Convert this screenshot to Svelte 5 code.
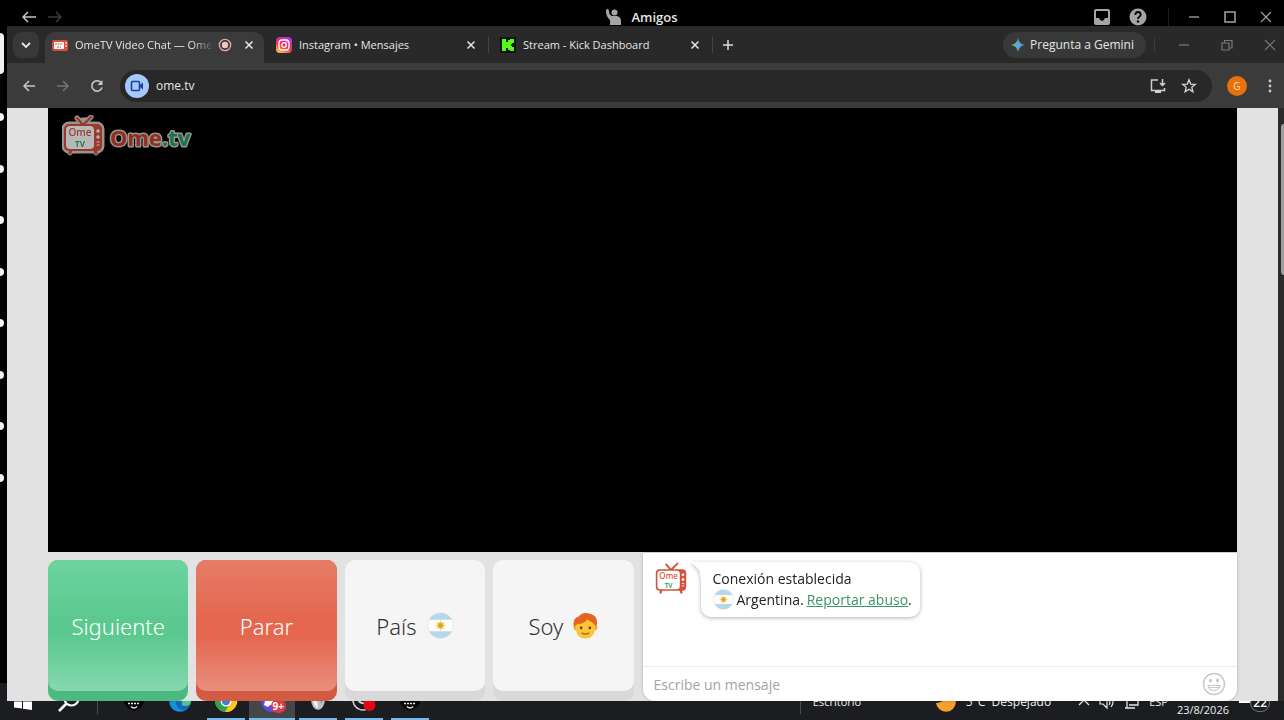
<script>
	let message = $state('');

	const railDots = [0, 1, 2, 3, 4, 5, 6, 7];
</script>

{#snippet cross()}
	<svg width="14" height="14" viewBox="0 0 14 14" aria-hidden="true">
		<path d="M2 2l10 10M12 2L2 12" stroke="currentColor" stroke-width="1.1" fill="none" />
	</svg>
{/snippet}

{#snippet tabCross()}
	<svg width="10" height="10" viewBox="0 0 10 10" aria-hidden="true">
		<path d="M1.5 1.5l7 7M8.5 1.5l-7 7" stroke="currentColor" stroke-width="1.5" fill="none" />
	</svg>
{/snippet}

{#snippet minus()}
	<svg width="14" height="14" viewBox="0 0 14 14" aria-hidden="true">
		<path d="M2 7h10" stroke="currentColor" stroke-width="1.3" fill="none" />
	</svg>
{/snippet}

{#snippet flag(size)}
	<svg class="flag" width={size} height={size} viewBox="0 0 26 26" aria-hidden="true">
		<circle cx="13" cy="13" r="12.5" fill="#fdfdfd" stroke="#e0e6ea" stroke-width=".8" />
		<path d="M2 7.5a12.5 12.5 0 0 1 22 0z" fill="#b4d7eb" />
		<path d="M2 18.5a12.5 12.5 0 0 0 22 0z" fill="#b4d7eb" />
		<path
			d="M13 7.8l1 2.8 2.7-1.3-1.3 2.7 2.8 1-2.8 1 1.3 2.7-2.7-1.3-1 2.8-1-2.8-2.7 1.3 1.3-2.7-2.8-1 2.8-1-1.3-2.7 2.7 1.3z"
			fill="#f5c542"
		/>
		<circle cx="13" cy="13" r="2.3" fill="#dba52f" />
	</svg>
{/snippet}

<!-- Телевизор с антенной, общий для логотипа и аватара -->
{#snippet tv()}
	<path d="M15 3l6 7 8-8" fill="none" stroke="#d6503c" stroke-width="2.4" stroke-linecap="round" />
	<path d="M9 35l-1 3M33 35l1 3" stroke="#d6503c" stroke-width="3" stroke-linecap="round" />
	<rect x="2" y="9" width="38" height="27" rx="5" fill="#d6503c" />
	<rect x="4" y="11" width="28" height="23" rx="4" fill="#fff" />
	<circle cx="36" cy="16" r="1.7" fill="#fff" />
	<circle cx="36" cy="22" r="1.7" fill="#fff" />
	<path d="M34.500 27h3M34.500 30h3" stroke="#fff" stroke-width="1" />
	<text class="tv-text" x="18" y="21" fill="#d6503c">Ome</text>
	<text class="tv-text small" x="18" y="32" fill="#3da577">TV</text>
{/snippet}

{#snippet shield()}
	<svg width="24" height="24" viewBox="0 0 24 24" aria-hidden="true">
		<path d="M2 5h20v9l-4 5-6 3-6-3-4-5z" fill="#050505" />
		<path d="M5 11h14M6 14.500h12" stroke="#e8e8e8" stroke-width="1.4" stroke-dasharray="2 1" />
		<path d="M9 17.500q3 3 6 0" stroke="#e8e8e8" stroke-width="1.500" fill="none" />
	</svg>
{/snippet}

<div class="desktop">
	<footer class="taskbar">
		<button class="task" aria-label="Inicio">
			<svg width="18" height="18" viewBox="0 0 18 18">
				<path d="M0 2.500l8-1v7H0zM9 1.400L18 0v8.500H9zM0 9.500h8v7l-8-1zM9 9.500h9V18l-9-1.300z" fill="#fff" />
			</svg>
		</button>
		<button class="task" aria-label="Buscar">
			<svg width="22" height="22" viewBox="0 0 22 22">
				<circle cx="13.500" cy="8.500" r="7" fill="none" stroke="#fff" stroke-width="2.200" />
				<path d="M8.500 13.500L1 21" stroke="#fff" stroke-width="2.600" />
			</svg>
		</button>
		<span class="task-line first"></span>
		<button class="task" aria-label="Lanzador">{@render shield()}</button>
		<button class="task" aria-label="Edge">
			<svg width="24" height="24" viewBox="0 0 24 24">
				<circle cx="12" cy="12" r="11" fill="#1466b8" />
				<path d="M1 9A11 11 0 0 1 23 12q0 5-6 5-4 0-3-3 1-6-5-6-5 0-8 4z" fill="#45c98a" />
				<path d="M8 12q-1 8 8 9-9 4-14-5 0-5 6-4z" fill="#1b8fd6" />
			</svg>
		</button>
		<button class="task open" aria-label="Chrome">
			<svg width="24" height="24" viewBox="0 0 24 24">
				<circle cx="12" cy="12" r="11" fill="#e23c2f" />
				<path d="M2.500 6.500A11 11 0 0 0 11 23l5-8.500-4 2-5-2z" fill="#2fa34f" />
				<path d="M12 7h10a11 11 0 0 1-11 16l5-8.500z" fill="#f8c922" />
				<circle cx="12" cy="12" r="5.500" fill="#fff" />
				<circle cx="12" cy="12" r="4.200" fill="#3c7ee8" />
			</svg>
		</button>
		<button class="task open active" aria-label="Discord">
			<svg width="24" height="24" viewBox="0 0 24 24">
				<circle cx="12" cy="12" r="11" fill="#5a4be0" />
				<path d="M6 8q6-3 12 0l2 8-4 2-2-2h-4l-2 2-4-2z" fill="#fff" />
			</svg>
			<span class="badge">9+</span>
		</button>
		<button class="task open" aria-label="Aplicación">
			<svg width="22" height="22" viewBox="0 0 22 22">
				<ellipse cx="11" cy="9" rx="7" ry="11" fill="#b9bfc3" />
				<path d="M6 8q5 2 5 10-5-1-5-10z" fill="#eef1f2" />
				<path d="M13 8h3l-2 6z" fill="#7b8387" />
			</svg>
		</button>
		<button class="task open" aria-label="OBS">
			<svg width="24" height="24" viewBox="0 0 24 24">
				<circle cx="11" cy="11" r="10" fill="#17191b" stroke="#d2d2d2" stroke-width="1.500" />
				<path d="M6 9q1 6 7 5M13 6q5 2 3 8" stroke="#d2d2d2" stroke-width="2" fill="none" />
				<circle cx="17.500" cy="16" r="6" fill="#e30613" />
			</svg>
		</button>
		<button class="task open" aria-label="Lanzador 2">{@render shield()}</button>

		<div class="tray">
			<span class="task-line"></span>
			<span class="desk-label">Escritorio</span>
			<svg width="22" height="22" viewBox="0 0 22 22" aria-hidden="true">
				<path d="M13 1q1 9-12 11a10 10 0 1 0 12-11z" fill="#f5a02c" />
			</svg>
			<span class="weather">5°C&nbsp; Despejado</span>
			<svg width="12" height="12" viewBox="0 0 12 12" aria-hidden="true">
				<path d="M1 9l5-5 5 5" fill="none" stroke="#e8e8e8" stroke-width="1.300" />
			</svg>
			<svg width="16" height="16" viewBox="0 0 16 16" aria-hidden="true">
				<path d="M1 6h3l4-4v12l-4-4H1zM10 5q2 3 0 6M12 3q4 5 0 10" fill="none" stroke="#e8e8e8" stroke-width="1.200" />
			</svg>
			<svg width="16" height="16" viewBox="0 0 16 16" aria-hidden="true">
				<path d="M2 3h12v8H5M3 6v8M1 14h10" fill="none" stroke="#e8e8e8" stroke-width="1.300" />
			</svg>
			<span>ESP</span>
			<span class="date">23/8/2026</span>
			<span class="notice">
				<svg width="20" height="18" viewBox="0 0 20 18" aria-hidden="true">
					<path d="M1 1h16v11H8l-4 0H1z" fill="#fff" />
				</svg>
				<span class="count">22</span>
			</span>
		</div>
	</footer>

	<header class="titlebar">
		<nav class="history">
			<button aria-label="Atrás">
				<svg width="16" height="12" viewBox="0 0 16 12">
					<path d="M15 6H2M7 1L2 6l5 5" fill="none" stroke="#c4c4c4" stroke-width="1.500" />
				</svg>
			</button>
			<button aria-label="Adelante">
				<svg width="16" height="12" viewBox="0 0 16 12">
					<path d="M1 6h13M9 1l5 5-5 5" fill="none" stroke="#3c3c3c" stroke-width="1.500" />
				</svg>
			</button>
		</nav>
		<div class="title">
			<svg width="16" height="16" viewBox="0 0 16 16" aria-hidden="true">
				<circle cx="8.500" cy="3.500" r="3" fill="#a5a5a5" />
				<path d="M1 0q2 0 2 2 0 4 3 5h5q4 1 4 5v4H4v-5Q0 8 0 2q0-2 1-2z" fill="#a5a5a5" />
			</svg>
			<span>Amigos</span>
		</div>
		<div class="title-tools">
			<button aria-label="Bandeja">
				<svg width="16" height="16" viewBox="0 0 16 16">
					<path d="M2 0h12q2 0 2 2v12q0 2-2 2H2q-2 0-2-2V2q0-2 2-2zM2 2v7h3q1 3 3 3t3-3h3V2z" fill="#a5a5a5" fill-rule="evenodd" />
				</svg>
			</button>
			<button aria-label="Ayuda">
				<svg width="18" height="18" viewBox="0 0 18 18">
					<circle cx="9" cy="9" r="8.500" fill="#a5a5a5" />
					<path d="M6.300 7q0-3 2.700-3t2.700 2.500q0 1.300-1.400 2.200Q9 9.500 9 11" fill="none" stroke="#000" stroke-width="1.800" />
					<circle cx="9" cy="13.500" r="1.200" fill="#000" />
				</svg>
			</button>
			<span class="title-line"></span>
			<button aria-label="Minimizar">{@render minus()}</button>
			<button aria-label="Maximizar">
				<svg width="12" height="12" viewBox="0 0 12 12">
					<rect x="1" y="1" width="10" height="10" fill="none" stroke="currentColor" stroke-width="1.500" />
				</svg>
			</button>
			<button aria-label="Cerrar">{@render cross()}</button>
		</div>
	</header>

	<div class="stage">
		<aside class="rail">
			<span class="pill"></span>
			<div class="dots">
				{#each railDots as dot (dot)}
					<span class="dot"></span>
				{/each}
			</div>
		</aside>

		<main class="browser">
			<div class="tabstrip">
				<button class="tab-search" aria-label="Buscar pestañas">
					<svg width="10" height="8" viewBox="0 0 10 8">
						<path d="M1 2l4 4 4-4" fill="none" stroke="#e6e6e6" stroke-width="1.800" />
					</svg>
				</button>

				<div class="tab current">
					<svg width="16" height="16" viewBox="0 0 16 16" aria-hidden="true">
						<rect x="0" y="3" width="16" height="11" rx="2" fill="#d6503c" />
						<rect x="2" y="5" width="10" height="7" rx="1" fill="#fff" />
						<path d="M3 7h8M5 10h4" stroke="#cf8d76" stroke-width="1.500" stroke-dasharray="2 .6" />
						<path d="M13 6h2M13 9h2" stroke="#fff" stroke-width="1" />
					</svg>
					<span class="tab-name fade">OmeTV Video Chat — Ome</span>
					<svg width="14" height="14" viewBox="0 0 14 14" aria-hidden="true">
						<circle cx="7" cy="7" r="5.700" fill="none" stroke="#e4a9a9" stroke-width="1.300" />
						<circle cx="7" cy="7" r="3.200" fill="#f1c3c3" />
					</svg>
					<button class="tab-close" aria-label="Cerrar pestaña">{@render tabCross()}</button>
				</div>

				<div class="tab">
					<svg width="16" height="16" viewBox="0 0 16 16" aria-hidden="true">
						<defs>
							<linearGradient id="insta" x1="0.2" y1="1" x2="0.7" y2="0">
								<stop offset="0" stop-color="#ffc83d" />
								<stop offset=".45" stop-color="#f6314d" />
								<stop offset="1" stop-color="#b52be0" />
							</linearGradient>
						</defs>
						<rect x="0" y="0" width="16" height="16" rx="4" fill="url(#insta)" />
						<rect x="3" y="3" width="10" height="10" rx="3" fill="none" stroke="#fff" stroke-width="1.300" />
						<circle cx="8" cy="8" r="2.300" fill="none" stroke="#fff" stroke-width="1.300" />
						<circle cx="11" cy="5" r=".7" fill="#fff" />
					</svg>
					<span class="tab-name">Instagram • Mensajes</span>
					<button class="tab-close" aria-label="Cerrar pestaña">{@render tabCross()}</button>
				</div>

				<div class="tab">
					<svg width="16" height="16" viewBox="0 0 16 16" aria-hidden="true">
						<rect width="16" height="16" fill="#0c130a" />
						<path d="M2 2h4v3h2V3h2V2h4v4h-2v1h-1v2h1v1h2v4h-4v-1H8v-2H6v3H2z" fill="#53fc18" />
						<path d="M5 5h5v6H5z" fill="#53fc18" />
					</svg>
					<span class="tab-name">Stream - Kick Dashboard</span>
					<button class="tab-close" aria-label="Cerrar pestaña">{@render tabCross()}</button>
				</div>

				<button class="new-tab" aria-label="Nueva pestaña">
					<svg width="12" height="12" viewBox="0 0 12 12">
						<path d="M6 1v10M1 6h10" stroke="#dcdcdc" stroke-width="1.500" />
					</svg>
				</button>

				<button class="gemini">
					<svg width="14" height="14" viewBox="0 0 14 14" aria-hidden="true">
						<defs>
							<linearGradient id="spark">
								<stop offset="0" stop-color="#8fc16a" />
								<stop offset=".5" stop-color="#5aa4d8" />
								<stop offset="1" stop-color="#4a8cf0" />
							</linearGradient>
						</defs>
						<path d="M7 0q1 6 7 7-6 1-7 7-1-6-7-7 6-1 7-7z" fill="url(#spark)" />
					</svg>
					<span>Pregunta a Gemini</span>
				</button>
				<div class="win-tools">
					<button aria-label="Minimizar ventana">{@render minus()}</button>
					<button aria-label="Restaurar ventana">
						<svg width="14" height="14" viewBox="0 0 14 14">
							<path d="M2 5h7v7H2zM4.500 5V2.500H12V10H9" fill="none" stroke="currentColor" stroke-width="1.200" />
						</svg>
					</button>
					<button aria-label="Cerrar ventana">{@render cross()}</button>
				</div>
			</div>

			<div class="toolbar">
				<div class="nav">
					<button aria-label="Página anterior">
						<svg width="16" height="16" viewBox="0 0 16 16">
							<path d="M14 8H3M8 3L3 8l5 5" fill="none" stroke="#c8c8c8" stroke-width="1.500" />
						</svg>
					</button>
					<button aria-label="Página siguiente">
						<svg width="16" height="16" viewBox="0 0 16 16">
							<path d="M2 8h11M8 3l5 5-5 5" fill="none" stroke="#747474" stroke-width="1.500" />
						</svg>
					</button>
					<button aria-label="Recargar">
						<svg width="16" height="16" viewBox="0 0 16 16">
							<path d="M13 9.500A5.200 5.200 0 1 1 12 4.500" fill="none" stroke="#c8c8c8" stroke-width="1.600" />
							<path d="M13.500 2v5h-5z" fill="#c8c8c8" />
						</svg>
					</button>
				</div>
				<div class="omnibox">
					<span class="cam">
						<svg width="14" height="12" viewBox="0 0 14 12" aria-hidden="true">
							<rect x="1.500" y="1.500" width="8" height="9" rx="1" fill="none" stroke="#12459c" stroke-width="1.600" />
							<path d="M10 5l3-2.500v7L10 7z" fill="#12459c" />
						</svg>
					</span>
					<input class="url" aria-label="Dirección" value="ome.tv" />
					<button aria-label="Instalar">
						<svg width="16" height="16" viewBox="0 0 16 16">
							<path d="M8 2H1.500v10.500h13V10M12.500 1v6M10 5l2.500 2.500L15 5" fill="none" stroke="#d0d0d0" stroke-width="1.500" />
							<path d="M5 12h6v3H5z" fill="#d0d0d0" />
						</svg>
					</button>
					<button aria-label="Favorito">
						<svg width="16" height="16" viewBox="0 0 16 16">
							<path d="M8 1.800l1.700 4.300 4.600.3-3.500 2.900 1.100 4.500L8 11.300l-3.900 2.500 1.100-4.500L1.700 6.400l4.600-.3z" fill="none" stroke="#d8d8d8" stroke-width="1.300" />
						</svg>
					</button>
				</div>
				<button class="profile">G</button>
				<button aria-label="Menú">
					<svg width="16" height="16" viewBox="0 0 16 16">
						<g fill="#c8c8c8">
							<circle cx="8" cy="3" r="1.400" />
							<circle cx="8" cy="8" r="1.400" />
							<circle cx="8" cy="13" r="1.400" />
						</g>
					</svg>
				</button>
			</div>

			<div class="viewport">
				<div class="page">
					<section class="video">
						<svg class="logo" width="134" height="42" viewBox="0 0 134 42" role="img" aria-label="Ome.tv">
							<g class="halo">
								<path d="M15 3l6 7 8-8M9 35l-1 3M33 35l1 3" />
								<rect x="2" y="9" width="38" height="27" rx="5" />
							</g>
							{@render tv()}
							<text class="word" x="48" y="31"><tspan fill="#c93f2c">Ome</tspan><tspan fill="#26a06b">.tv</tspan></text>
						</svg>
					</section>

					<section class="panel">
						<div class="actions">
							<button class="key green"><span>Siguiente</span></button>
							<button class="key red"><span>Parar</span></button>
							<button class="key"><span>País {@render flag(27)}</span></button>
							<button class="key">
								<span>
									Soy
									<svg width="25" height="28" viewBox="0 0 26 28" aria-hidden="true">
										<circle cx="3" cy="16" r="2.500" fill="#f5ae28" />
										<circle cx="23" cy="16" r="2.500" fill="#f5ae28" />
										<path d="M3 11q10-9 20 0v6q-1 10-10 10T3 17z" fill="#fcc436" />
										<path d="M1 15Q-1 6 6 4q4-5 11-3 8 2 8 9 0 3-1 5-1-3-4-5-3-1-5-3-3 5-10 5-2 1-4 3z" fill="#e5641f" />
										<circle cx="8.500" cy="16" r="1.400" fill="#6b4210" />
										<circle cx="17.500" cy="16" r="1.400" fill="#6b4210" />
										<path d="M9 21q4 3 8 0" fill="none" stroke="#a4641a" stroke-width="1.300" />
									</svg>
								</span>
							</button>
						</div>

						<div class="chat">
							<div class="log">
								<svg width="34" height="32" viewBox="0 0 42 40" aria-hidden="true">{@render tv()}</svg>
								<div class="bubble">
									<p>Conexión establecida</p>
									<p>{@render flag(21)} Argentina. <a href="#abuso">Reportar abuso</a><i>.</i></p>
								</div>
							</div>
							<div class="compose">
								<input aria-label="Mensaje" placeholder="Escribe un mensaje" bind:value={message} />
								<button aria-label="Emojis">
									<svg width="24" height="24" viewBox="0 0 24 24">
										<circle cx="12" cy="12" r="10.500" fill="none" stroke="#c9c9c9" stroke-width="1.500" />
										<ellipse cx="8.500" cy="8.500" rx="1.200" ry="2" fill="#bdbdbd" />
										<ellipse cx="15.500" cy="8.500" rx="1.200" ry="2" fill="#bdbdbd" />
										<path d="M6 13.500h12q-1 5-6 5t-6-5zM7 15.500h10" fill="none" stroke="#c9c9c9" stroke-width="1.200" />
									</svg>
								</button>
							</div>
						</div>
					</section>
				</div>
				<div class="scroll"><span class="thumb"></span></div>
			</div>
		</main>
	</div>
</div>

<style>
	:global(body) {
		margin: 0;
		background: #000;
	}

	.desktop {
		position: relative;
		display: flex;
		flex-direction: column;
		box-sizing: border-box;
		height: 100vh;
		padding-bottom: 19px;
		overflow: hidden;
		background: #000;
		color: #e6e6e6;
		font-family: 'Open Sans', 'Noto Sans', sans-serif;
		font-size: 11px;
	}

	button {
		display: flex;
		align-items: center;
		justify-content: center;
		flex: none;
		margin: 0;
		padding: 0;
		border: 0;
		background: none;
		color: inherit;
		font: inherit;
	}

	input {
		min-width: 0;
		flex: 1;
		padding: 0;
		border: 0;
		outline: 0;
		background: none;
		color: inherit;
		font: inherit;
	}

	svg {
		flex: none;
	}

	/* Заголовок внешнего окна */
	.titlebar {
		display: grid;
		grid-template-columns: 1fr auto 1fr;
		align-items: center;
		flex: none;
		height: 26px;
		padding-top: 8px;
		box-sizing: border-box;
	}

	.history {
		display: flex;
		gap: 10px;
		padding-left: 21px;
	}

	.title {
		display: flex;
		align-items: center;
		gap: 9px;
		font-size: 13px;
		line-height: 18px;
		font-weight: 600;
	}

	.title-tools {
		display: flex;
		justify-content: flex-end;
		color: #a5a5a5;
	}

	.title-tools button {
		width: 36px;
	}

	.title-line {
		width: 1px;
		margin: 0 7px 0 12px;
		background: #1c1c1c;
	}

	.stage {
		position: relative;
		z-index: 1;
		display: flex;
		flex: 1;
		min-height: 0;
	}

	/* Полоска серверов слева */
	.rail {
		display: flex;
		flex-direction: column;
		align-items: flex-end;
		flex: none;
		width: 4px;
		margin-right: 3px;
		padding-top: 7px;
		box-sizing: border-box;
		overflow: hidden;
	}

	.pill,
	.dot {
		flex: none;
		width: 8px;
		background: #f2f2f2;
	}

	.pill {
		height: 41px;
		margin-bottom: 39px;
		border-radius: 4px;
	}

	.dots {
		display: flex;
		flex: none;
		flex-direction: column;
		justify-content: space-between;
		height: 369px;
	}

	.dot {
		height: 8px;
		border-radius: 50%;
	}

	.browser {
		display: flex;
		flex: 1;
		flex-direction: column;
		min-width: 0;
		background: #3b3b3b;
	}

	.tabstrip {
		display: flex;
		align-items: center;
		flex: none;
		height: 37px;
		padding-left: 6px;
		background: #292929;
	}

	.tab-search {
		width: 26px;
		height: 26px;
		margin-right: 6px;
		border-radius: 8px;
		background: #383838;
	}

	.tab {
		display: flex;
		align-items: center;
		flex: 0 1 224px;
		min-width: 0;
		box-sizing: border-box;
		height: 16px;
		padding: 0 12px 0 11px;
		gap: 7px;
		border-right: 1px solid #444;
	}

	.tab.current {
		flex: 0 1 219px;
		align-self: flex-end;
		height: 31px;
		margin-right: 1px;
		padding: 0 10px 5px 7px;
		border-right: 0;
		border-radius: 10px 10px 0 0;
		background: #3b3b3b;
	}

	.tab-name {
		flex: 1;
		min-width: 0;
		overflow: hidden;
		white-space: nowrap;
		line-height: 16px;
	}

	.fade {
		mask-image: linear-gradient(90deg, #000 85%, rgba(0, 0, 0, 0.2));
	}

	.tab-close {
		width: 10px;
		margin-left: 5px;
	}

	.new-tab {
		width: 30px;
	}

	.gemini {
		gap: 5px;
		height: 26px;
		margin-left: auto;
		padding: 0 12px 0 8px;
		border-radius: 13px;
		background: #383838;
		font-size: 12px;
	}

	.win-tools {
		display: flex;
		gap: 29px;
		margin-left: 8px;
		padding: 0 7px 0 22px;
		border-left: 1px solid #3c3c3c;
		color: #777;
	}

	.toolbar {
		display: flex;
		align-items: center;
		flex: none;
		gap: 15px;
		height: 45px;
		padding: 0 6px 0 14px;
	}

	.nav {
		display: flex;
		gap: 18px;
	}

	.omnibox {
		display: flex;
		align-items: center;
		flex: 1;
		gap: 15px;
		height: 32px;
		padding: 0 15px 0 5px;
		border-radius: 16px;
		background: #282828;
	}

	.cam {
		display: flex;
		align-items: center;
		justify-content: center;
		flex: none;
		width: 24px;
		height: 24px;
		margin-right: -8px;
		border-radius: 50%;
		background: #a8c7fa;
	}

	.url {
		font-size: 12px;
	}

	.profile {
		width: 20px;
		height: 20px;
		border-radius: 50%;
		background: #e8710a;
		color: #f8dcc0;
		font-size: 10px;
	}

	.viewport {
		display: flex;
		flex: 1;
		min-height: 0;
	}

	.page {
		display: flex;
		flex: 1;
		flex-direction: column;
		padding: 0 41px;
		background: #e2e2e2;
	}

	.scroll {
		width: 3px;
		padding: 16px 0 0 3px;
		background: #2b2b2b;
	}

	.thumb {
		display: block;
		height: 151px;
		border-radius: 3px 0 0 3px;
		background: #9c9c9c;
	}

	.video {
		flex: 1;
		padding: 7px 14px;
		background: #000;
	}

	.logo {
		display: block;
		opacity: 0.72;
	}

	.halo {
		fill: #d5cdc4;
		stroke: #d5cdc4;
		stroke-width: 5px;
		stroke-linejoin: round;
		stroke-linecap: round;
	}

	.tv-text {
		font-family: 'Noto Sans', sans-serif;
		font-size: 10px;
		font-weight: 500;
		text-anchor: middle;
	}

	.tv-text.small {
		font-size: 8px;
		font-weight: 700;
	}

	.word {
		font-family: 'Noto Sans', sans-serif;
		font-size: 22px;
		font-weight: 700;
		paint-order: stroke;
		stroke: #d5cdc4;
		stroke-width: 3px;
		stroke-linejoin: round;
	}

	/* Кнопки и чат под видео */
	.panel {
		display: grid;
		grid-template-columns: 1fr 1fr;
		flex: none;
		height: 149px;
	}

	.actions {
		display: grid;
		grid-template-columns: repeat(4, 1fr);
		gap: 8px;
		padding: 8px 9px 0 0;
	}

	.key {
		align-items: stretch;
		padding-bottom: 10px;
		border-radius: 10px;
		background: #d9d9d9;
		color: #333;
		font-family: 'Noto Sans', sans-serif;
		font-size: 22px;
		font-weight: 300;
	}

	.key span {
		display: flex;
		align-items: center;
		justify-content: center;
		flex: 1;
		gap: 10px;
		border-radius: 10px;
		background: #f5f5f5;
	}

	.green {
		background: #4cb981;
		color: #fff;
	}

	.green span {
		background: linear-gradient(#6dd4a0, #5bc98f 45%, #5bc98f 58%, #86d8ae);
	}

	.red {
		background: #d35b42;
		color: #fff;
	}

	.red span {
		background: linear-gradient(#e67c67, #e4674e 45%, #e4674e 58%, #e98f7e);
	}

	.chat {
		display: flex;
		flex-direction: column;
		margin-top: 1px;
		border-radius: 0 0 12px 12px;
		background: #fff;
		box-shadow: 0 0 3px rgba(0, 0, 0, 0.25);
		color: #222;
	}

	.log {
		display: flex;
		align-items: flex-start;
		flex: 1;
		gap: 13px;
		padding: 9px 11px 0;
	}

	.bubble {
		position: relative;
		padding: 6px 8px 7px 12px;
		border-radius: 10px;
		background: #fff;
		filter: drop-shadow(0 1px 2px rgba(0, 0, 0, 0.3));
		font-size: 14px;
	}

	/* Хвостик сообщения */
	.bubble::before {
		content: '';
		position: absolute;
		top: 0;
		left: -9px;
		width: 20px;
		height: 16px;
		background: #fff;
		clip-path: polygon(0 0, 100% 0, 100% 100%, 45% 100%, 40% 55%);
	}

	.bubble p {
		display: flex;
		align-items: center;
		gap: 3px;
		margin: 0;
		line-height: 21px;
	}

	.bubble a {
		color: #3c9468;
	}

	.bubble i {
		margin-left: -3px;
		font-style: normal;
	}

	.compose {
		display: flex;
		align-items: center;
		height: 34px;
		padding: 0 11px;
		border-top: 1px solid #ececec;
		font-size: 14px;
	}

	.compose input::placeholder {
		color: #a3a3a3;
		opacity: 1;
	}

	/* Панель задач, частично закрыта окном */
	.taskbar {
		position: absolute;
		right: 0;
		bottom: 0;
		left: 0;
		display: flex;
		height: 37px;
		background: #1b1d20;
	}

	.task {
		position: relative;
		box-sizing: border-box;
		width: 46px;
		border-bottom: 2px solid transparent;
	}

	.open::after {
		content: '';
		position: absolute;
		right: 4px;
		bottom: -2px;
		left: 4px;
		height: 2px;
		background: #76b9ed;
	}

	.active {
		background: #44464a;
	}

	.active::after {
		right: 0;
		left: 0;
	}

	.badge {
		position: absolute;
		right: 9px;
		bottom: 5px;
		padding: 0 2px;
		border-radius: 8px;
		background: #d93a4a;
		color: #fff;
		font-size: 10px;
		font-weight: 700;
		line-height: 14px;
	}

	.task-line {
		flex: none;
		width: 1px;
		height: 24px;
		background: #4a4c4f;
	}

	.task-line.first {
		align-self: center;
		margin: 0 13px 0 5px;
	}

	.tray {
		display: flex;
		align-items: center;
		gap: 9px;
		margin-left: auto;
		padding-right: 14px;
		color: #eee;
	}

	.desk-label {
		width: 113px;
		margin-left: 3px;
	}

	.weather {
		margin-right: 18px;
		font-size: 12px;
	}

	.date {
		align-self: flex-end;
		padding-bottom: 3px;
	}

	.notice {
		position: relative;
		width: 32px;
	}

	.count {
		position: absolute;
		top: 3px;
		right: 0;
		padding: 0 2px;
		border: 1px solid #777;
		border-radius: 9px;
		background: #1b1d20;
		color: #fff;
		font-size: 12px;
		font-weight: 600;
		line-height: 16px;
	}
</style>
